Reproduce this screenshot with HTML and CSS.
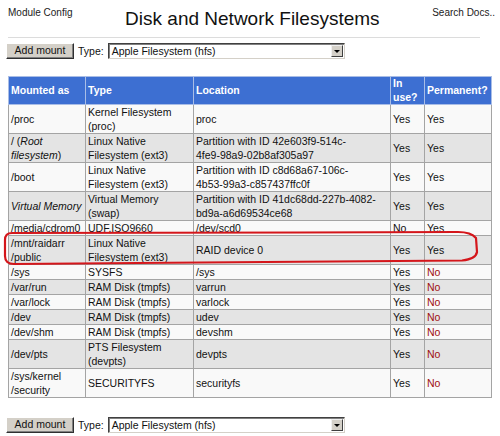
FILE: index.html
```html
<!DOCTYPE html>
<html>
<head>
<meta charset="utf-8">
<title>Disk and Network Filesystems</title>
<link rel="stylesheet" href="styles.css">
</head>
<body>
<div class="page">
  <div class="head">
    <div class="toplink">Module Config</div>
    <h1 class="title">Disk and Network Filesystems</h1>
    <div class="toplink">Search Docs..</div>
  </div>
  <hr class="rule">
  <div class="form-row">
    <div class="btn">Add mount</div>
    <span class="lbl">Type:</span>
    <div class="select"><span class="sel-text">Apple Filesystem (hfs)</span><span class="sel-arrow"></span></div>
  </div>
  <table class="mounts">
    <colgroup>
      <col class="c1"><col class="c2"><col class="c3"><col class="c4"><col class="c5">
    </colgroup>
    <thead>
      <tr><th>Mounted as</th><th>Type</th><th>Location</th><th>In<br>use?</th><th>Permanent?</th></tr>
    </thead>
    <tbody>
      <tr><td>/proc</td><td>Kernel Filesystem<br>(proc)</td><td>proc</td><td>Yes</td><td>Yes</td></tr>
      <tr><td>/ (<i>Root<br>filesystem</i>)</td><td>Linux Native<br>Filesystem (ext3)</td><td>Partition with ID 42e603f9-514c-<br>4fe9-98a9-02b8af305a97</td><td>Yes</td><td>Yes</td></tr>
      <tr><td>/boot</td><td>Linux Native<br>Filesystem (ext3)</td><td>Partition with ID c8d68a67-106c-<br>4b53-99a3-c857437ffc0f</td><td>Yes</td><td>Yes</td></tr>
      <tr><td><i>Virtual Memory</i></td><td>Virtual Memory<br>(swap)</td><td>Partition with ID 41dc68dd-227b-4082-<br>bd9a-a6d69534ce68</td><td>Yes</td><td>Yes</td></tr>
      <tr><td>/media/cdrom0</td><td>UDF,ISO9660</td><td>/dev/scd0</td><td>No</td><td>Yes</td></tr>
      <tr><td>/mnt/raidarr<br>/public</td><td>Linux Native<br>Filesystem (ext3)</td><td>RAID device 0</td><td>Yes</td><td>Yes</td></tr>
      <tr><td>/sys</td><td>SYSFS</td><td>/sys</td><td>Yes</td><td class="no">No</td></tr>
      <tr><td>/var/run</td><td>RAM Disk (tmpfs)</td><td>varrun</td><td>Yes</td><td class="no">No</td></tr>
      <tr><td>/var/lock</td><td>RAM Disk (tmpfs)</td><td>varlock</td><td>Yes</td><td class="no">No</td></tr>
      <tr><td>/dev</td><td>RAM Disk (tmpfs)</td><td>udev</td><td>Yes</td><td class="no">No</td></tr>
      <tr><td>/dev/shm</td><td>RAM Disk (tmpfs)</td><td>devshm</td><td>Yes</td><td class="no">No</td></tr>
      <tr><td>/dev/pts</td><td>PTS Filesystem<br>(devpts)</td><td>devpts</td><td>Yes</td><td class="no">No</td></tr>
      <tr><td>/sys/kernel<br>/security</td><td>SECURITYFS</td><td>securityfs</td><td>Yes</td><td class="no">No</td></tr>
    </tbody>
  </table>
  <div class="form-row bottom">
    <div class="btn">Add mount</div>
    <span class="lbl">Type:</span>
    <div class="select"><span class="sel-text">Apple Filesystem (hfs)</span><span class="sel-arrow"></span></div>
  </div>
  <svg class="highlight" width="500" height="436" viewBox="0 0 500 436">
    <path d="M12 233 L300 232.5 L458 232 Q471 232 476 238 L477 252 Q476 259 462 260.5 L200 262.5 L14 264 Q5 264 5 256 L5 240 Q5 233 12 233 Z" fill="none" stroke="#d4161b" stroke-width="2.2" stroke-linejoin="round"/>
  </svg>
</div>
</body>
</html>
```
FILE: styles.css
```css
html, body {
  margin: 0;
  padding: 0;
  background: #ffffff;
}
.page {
  position: relative;
  width: 500px;
  height: 436px;
  overflow: hidden;
  font-family: "Liberation Sans", Arial, sans-serif;
  font-size: 10.5px;
  color: #111;
}
.head {
  display: flex;
  justify-content: space-between;
  align-items: flex-start;
  padding: 0 5px 0 8px;
  height: 37px;
}
.toplink {
  font-size: 10px;
  line-height: 12px;
  margin-top: 7px;
  color: #222;
}
.title {
  margin: 8px 0 0 0;
  font-size: 19px;
  line-height: 22px;
  font-weight: normal;
  color: #111;
}
.rule {
  margin: 0 20px 0 8px;
  border: 0;
  border-top: 1px solid #dcdcdc;
  height: 0;
}
.form-row {
  display: flex;
  align-items: center;
  margin-top: 5px;
  padding-left: 6px;
  height: 16px;
}
.form-row.bottom {
  margin-top: 19px;
}
.btn {
  box-sizing: border-box;
  width: 68px;
  height: 16px;
  background: #d4d0c8;
  border: 1px solid;
  border-color: #ffffff #303030 #303030 #ffffff;
  box-shadow: inset -1px -1px 0 #808080;
  text-align: center;
  line-height: 13px;
  font-size: 10.5px;
  color: #111;
}
.lbl {
  margin-left: 4px;
  margin-right: 4px;
}
.select {
  box-sizing: border-box;
  position: relative;
  width: 237px;
  height: 16px;
  background: #fff;
  border: 1px solid;
  border-color: #404040 #d4d0c8 #d4d0c8 #404040;
  box-shadow: inset 1px 1px 0 #808080;
  display: flex;
  align-items: center;
  justify-content: space-between;
}
.sel-text {
  padding-left: 3px;
  line-height: 13px;
}
.sel-arrow {
  box-sizing: border-box;
  width: 12px;
  height: 12px;
  margin-right: 1px;
  background: #d4d0c8;
  border: 1px solid;
  border-color: #f0f0f0 #404040 #404040 #f0f0f0;
  display: flex;
  align-items: center;
  justify-content: center;
}
.sel-arrow::after {
  content: "";
  width: 0;
  height: 0;
  border-left: 3px solid transparent;
  border-right: 3px solid transparent;
  border-top: 3px solid #000;
}
.mounts {
  margin: 17px 0 0 8px;
  width: 483px;
  table-layout: fixed;
  border-collapse: collapse;
  border: 1px solid #8a8a8a;
}
.c1 { width: 77px; }
.c2 { width: 108px; }
.c3 { width: 197px; }
.c4 { width: 34px; }
.c5 { width: 67px; }
.mounts th {
  background: #3d6fd2;
  color: #fff;
  font-weight: bold;
  text-align: left;
  vertical-align: middle;
  line-height: 13.5px;
  padding: 0 2px;
  border: 1px solid #a9bde6;
  white-space: nowrap;
}
.mounts td {
  line-height: 14px;
  padding: 0 2px;
  vertical-align: middle;
  border: 1px solid #a4a4a4;
  white-space: nowrap;
  background: #f9f9f9;
}
.mounts tbody tr:nth-child(even) td {
  background: #e4e4e4;
}
.mounts td.no {
  color: #a01010;
}
.highlight {
  position: absolute;
  left: 0;
  top: 0;
  pointer-events: none;
}
```
